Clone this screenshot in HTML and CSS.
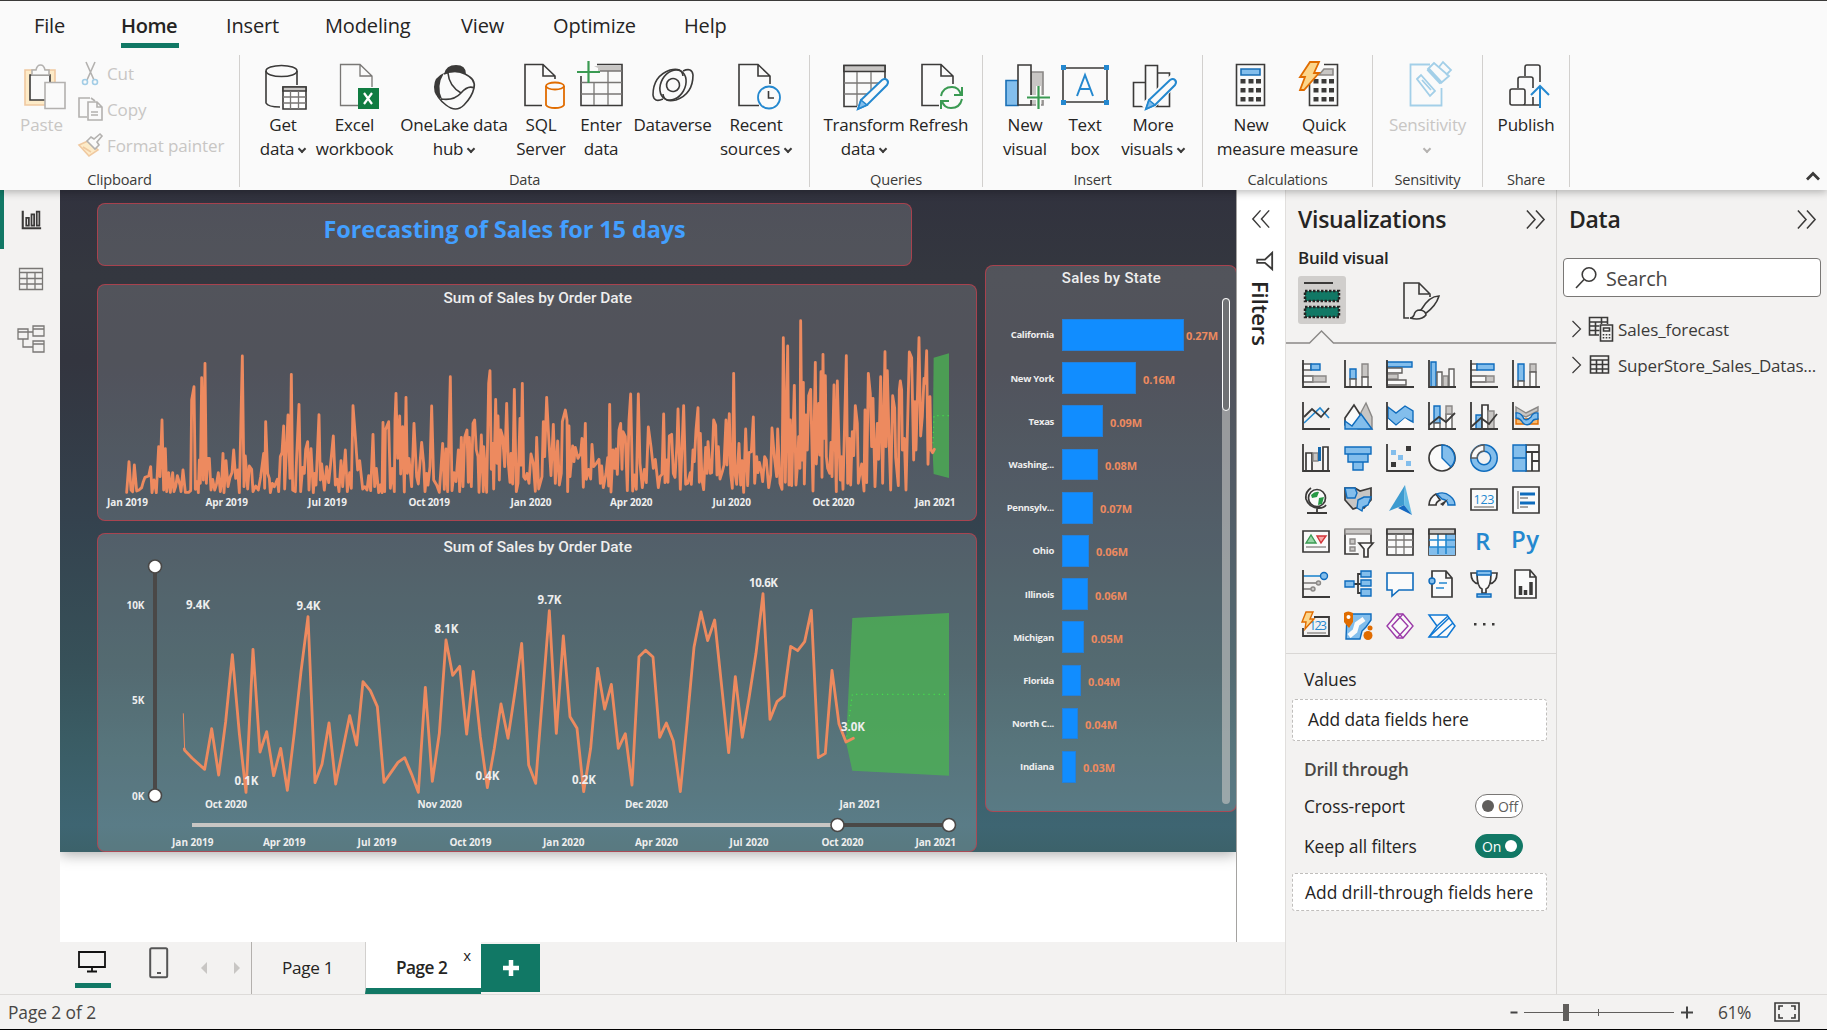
FILE: index.html
```html
<!DOCTYPE html>
<html lang="en">
<head>
<meta charset="utf-8">
<title>Sales forecast report</title>
<link rel="stylesheet" href="styles.css">
</head>
<body>
<div class="app">
<header class="ribbon">
  <nav class="tabs">
    <span class="tab t-file">File</span><span class="tab t-home active">Home</span><span class="tab t-insert">Insert</span><span class="tab t-model">Modeling</span><span class="tab t-view">View</span><span class="tab t-opt">Optimize</span><span class="tab t-help">Help</span>
  </nav>
  <div class="groups">
    <section class="group g-clip">
      <div class="clip">
        <div class="paste">
          <svg width="44" height="50" viewBox="22 62 44 50"><path class="tan" d="M26 70h30v35H26z"/><path d="M31 75h20v25H31z" fill="#fafafa"/><path class="dis" d="M33 75v-5h4q1-5 4.500-5t4.500 5h4v5z"/><path class="dis" d="M46 82.500h20v26H46z"/></svg>
          <span>Paste</span>
        </div>
        <div class="cliplist">
          <div><svg width="26" height="26" viewBox="77 60 26 26"><path class="dis" d="M86 62l8 18M95 62l-8 18"/><g fill="#fafafa" stroke="#a3cde6" stroke-width="1.600"><circle cx="85" cy="82" r="2.500"/><circle cx="95" cy="82" r="2.500"/></g></svg>Cut</div>
          <div><svg width="26" height="26" viewBox="77 96 26 26"><path class="dis" d="M90 98h-11v19h8M91 98l4 3"/><path class="dis" d="M88 102h9l5 5v13H88zM97 102v5h5M91 112h7M91 115h7"/></svg>Copy</div>
          <div><svg width="26" height="26" viewBox="77 132 26 26"><path class="tan" d="M79 145l9-4 10 9-9 6zM83 147l8 5"/><path class="dis" d="M87 141l4-4 3 2 6-5 2 2-5 6 2 3-4 4z"/></svg>Format painter</div>
        </div>
      </div>
      <h6>Clipboard</h6>
    </section>
    <section class="group g-data">
      <div class="btns">
        <div class="btn"><svg viewBox="-30 62 60 50"><path d="M-17 71v32q2 4 14 4M14 71v14"/><ellipse cx="-1.500" cy="71" rx="15.500" ry="5.500"/><path fill="#fff" d="M0 87h23v22H0z"/><path fill="#c8c6c4" d="M0 87h23v4H0z"/><path class="g" d="M0 97h23M0 103h23M7.500 91v18M15.500 91v18"/></svg><span>Get<br>data<i></i></span></div>
        <div class="btn"><svg viewBox="-30 62 60 50"><path class="g" d="M3 105.500h-17.500V64.500H5L17 76v11M5 64.500V76h12"/><path d="M3 88h21v21H3z" fill="#107c41" stroke="none"/><path d="M9 93l8 11M17 93L9 104" stroke="#fff" stroke-width="2.200"/></svg><span>Excel<br>workbook</span></div>
        <div class="btn"><svg viewBox="-30 62 60 50"><path fill="#3b3a39" stroke="none" d="M-10 74Q-8 65 2 65t10 9q-10-4-22 0zM-10 73Q-20 77-20 87t8 12q-6-13 2-26z"/><path d="M-10 74Q0 69 11 74T20 88 10 105-8 105-16 94M-6 73Q-5 86 7 93M-13 99Q0 101 7 93T20 88"/></svg><span>OneLake data<br>hub<i></i></span></div>
        <div class="btn"><svg viewBox="-30 62 60 50"><path d="M1 105.500h-17V64.500H2L14 76v3M2 64.500V76h12"/><g fill="#fafafa" stroke="#e06c00" stroke-width="1.800"><path d="M5 86v19q2 3 9 3t9-3V86"/><ellipse cx="14" cy="86" rx="9" ry="3.500"/></g></svg><span>SQL<br>Server</span></div>
        <div class="btn"><svg viewBox="-30 62 60 50"><path d="M-20 76v29.500h41v-41H-4"/><path fill="#c8c6c4" stroke="none" d="M-7 66h27v5H-3v-3z"/><path class="g" d="M-1 71h22M-20 82.500h41M-20 94h41M-7 83v22M7 71v34"/><path d="M-12.500 61v22M-24 72h23" stroke="#3a9a52" stroke-width="2.200"/></svg><span>Enter<br>data</span></div>
        <div class="btn"><svg viewBox="-30 62 60 50"><g transform="rotate(30 0 85)"><ellipse cx="0" cy="85" rx="12" ry="16"/><circle cx="0" cy="85" r="6.500"/></g><path d="M-10 99q-9 4-10-4 0-19 17-25 12-3 13 6M10 71q9-4 10 4 0 19-17 25-12 3-13-6"/></svg><span>Dataverse</span></div>
        <div class="btn"><svg viewBox="-30 62 60 50"><path d="M3 105.500h-20V64.500H2L14 76v8M2 64.500V76h12"/><circle cx="13" cy="97.500" r="11" fill="#fafafa" stroke="#2488cf" stroke-width="1.800"/><path d="M12.500 91v7H18"/></svg><span>Recent<br>sources<i></i></span></div>
      </div>
      <h6>Data</h6>
    </section>
    <section class="group g-query">
      <div class="btns">
        <div class="btn"><svg viewBox="-30 62 60 50"><path d="M-7 106.500h-13v-41h41v14"/><path d="M-20 65.500h41v6h-41z" fill="#c8c6c4"/><path class="g" d="M-20 83h37M-20 94h28M-7 72v34M7 72v22"/><path class="pen" d="M-6 109l3-9L18 80q3-2 5 0t0 5L3 105z"/><path class="pf" d="M-6 109l3-9 6 5z"/></svg><span>Transform<br>data<i></i></span></div>
        <div class="btn"><svg viewBox="-30 62 60 50"><path d="M0 105.500h-17V64.500H2L14 76v8M2 64.500V76h12"/><g stroke="#3a9a52" stroke-width="2"><path d="M2 96Q4 87 13 87q7 0 9 8M23 87v8h-8M23 99q-2 9-11 9-7 0-9-7M2 109v-8h8"/></g></svg><span>Refresh</span></div>
      </div>
      <h6>Queries</h6>
    </section>
    <section class="group g-insert">
      <div class="btns">
        <div class="btn"><svg viewBox="-30 62 60 50"><path d="M-19 80.500H-7v25h-12z" fill="#83beec" stroke="#1a6fb5"/><path d="M6 72h12v33H6z" fill="#c8c6c4" stroke="#8a8886"/><path d="M-7 65H6v40H-7z" fill="#fafafa"/><path d="M13.500 86v23M2 97.500h23" stroke="#fafafa" stroke-width="5"/><path d="M13.500 86v23M2 97.500h23" stroke="#3a9a52" stroke-width="2.200"/></svg><span>New<br>visual</span></div>
        <div class="btn"><svg viewBox="-30 62 60 50"><path d="M-22 68h44v34h-44z"/><g fill="#2488cf" stroke="none"><path d="M-24 65h5v5h-5zM19 65h5v5h-5zM-24 100h5v5h-5zM19 100h5v5h-5z"/></g><path d="M-8 96L0 75l8 21M-5 89H5" stroke="#2488cf" stroke-width="2"/></svg><span>Text<br>box</span></div>
        <div class="btn"><svg viewBox="-30 62 60 50"><path d="M-19.500 82.500h12v24h-12zM-7.500 65.500h12v41h-12zM4.500 73h12v33.500h-12z"/><path d="M-8 109L22 79" stroke="#fafafa" stroke-width="12"/><path class="pen" d="M-7 109l3-9L17 80q3-2 5 0t0 5L2 105z"/><path class="pf" d="M-7 109l3-9 6 5z"/></svg><span>More<br>visuals<i></i></span></div>
      </div>
      <h6>Insert</h6>
    </section>
    <section class="group g-calc">
      <div class="btns">
        <div class="btn"><svg viewBox="-30 62 60 50"><path d="M-14.500 64.500h28v41h-28z"/><path d="M-10 69H9v6h-19z" fill="#83beec" stroke="#1a6fb5"/><g class="k"><path d="M-8 79v24M0 79v24M7.500 79v24"/></g></svg><span>New<br>measure</span></div>
        <div class="btn"><svg viewBox="-30 62 60 50"><path d="M-14.500 84v21.500h28v-41H0"/><path d="M0 69h9v6h-14z" fill="#c8c6c4" stroke="#8a8886"/><g class="k"><path d="M-8 79v24M0 79v24M7.500 79v24"/></g><path d="M-14 62h9l-5 11h5l-15 17h-4l5-13h-5z" fill="#fcd58a" stroke="#e06c00" stroke-width="1.800"/></svg><span>Quick<br>measure</span></div>
      </div>
      <h6>Calculations</h6>
    </section>
    <section class="group g-sens">
      <div class="btns">
        <div class="btn off"><svg viewBox="-30 62 60 50"><g stroke="#a3cfe8" stroke-width="1.800"><path d="M2 64.500h-19.500v41h31V88M-11 79l4-4 14 16-5 5zM-6 80l9 10M0 69l6-6 15 13-8 7zM11 67l4-5 8 8-5 5"/><path d="M0 69l13 14" stroke-width="4"/></g></svg><span>Sensitivity<br><i></i></span></div>
      </div>
      <h6>Sensitivity</h6>
    </section>
    <section class="group g-share">
      <div class="btns">
        <div class="btn"><svg viewBox="-30 62 60 50"><path d="M-16 91q0-2 2-2H-3q2 0 2 2v12q0 2-2 2h-11q-2 0-2-2zM-8 88V79q0-2 2-2H5q2 0 2 2v9M-1 76V67q0-2 2-2h11q2 0 2 2v15M-2 105H14M7 97v8"/><path d="M14 108V86M5 95l9-9 9 9" stroke="#2488cf" stroke-width="2"/></svg><span>Publish</span></div>
      </div>
      <h6>Share</h6>
    </section>
    <svg class="collapse" width="18" height="12" viewBox="0 0 18 12"><path d="M3 9.500l6-6 6 6" stroke-width="2.800"/></svg>
  </div>
</header>

<main class="work">
  <aside class="rail">
    <div class="railitem on"><svg width="21" height="21" viewBox="0 0 24 24"><path d="M2 2v20h21" stroke-width="2.400"/><path d="M6 10h3v9H6zM12 6h3v13h-3zM18 3h3v16h-3z" stroke-width="2"/></svg></div>
    <div class="railitem"><svg width="26" height="26" viewBox="0 0 26 26"><path class="g" d="M1.500 2.500h23v21h-23zM1.500 6.500h23M1.500 12.500h23M1.500 18h23M9 6v17M17 6v17"/></svg></div>
    <div class="railitem"><svg width="30" height="30" viewBox="0 0 30 30"><path class="g" d="M2 5h10v10H2zM2 8h10M17 2h11v10H17zM17 5h11M17 17h11v11H17zM17 20h11M12 8h5M7 15v8h10"/></svg></div>
  </aside>
  <section class="center">
    <div class="stage">
      <div class="report">
        <div class="col-left">
          <div class="card headline">Forecasting of Sales for 15 days</div>
          <div class="card chart1">
            <svg width="880" height="236" viewBox="97 284 880 236">
              <text class="title" x="443.500" y="303" textLength="188.500" lengthAdjust="spacingAndGlyphs">Sum of Sales by Order Date</text>
              <g transform="translate(60 190) scale(.33333)">
                <path class="band" d="M2618 785L2621 503L2667 490V864L2621 852z"/>
                <path class="dots" d="M2619 760L2622 677H2667"/>
                <polyline class="sales" points="200,907 207,815 213,900 218,905 223,825 230,903 237,900 245,893 250,875 255,862 266,858 272,830 276,908 282,870 289,908 296,770 300,860 306,690 311,900 316,776 320,905 326,848 331,907 338,848 342,905 347,890 352,857 360,885 363,905 369,840 376,907 386,907 392,902 395,630 402,590 406,898 411,875 415,908 418,810 421,880 425,563 430,870 435,520 439,880 443,805 448,805 453,900 458,868 464,900 469,885 475,848 481,905 485,875 489,790 492,908 498,812 504,890 510,862 516,848 521,780 527,865 533,840 538,908 547,498 552,890 556,798 563,897 568,828 575,838 579,905 587,888 595,900 602,860 611,790 614,895 617,695 623,850 628,865 631,908 637,880 643,890 652,868 656,905 661,800 666,788 671,708 674,897 684,675 690,865 694,553 698,900 706,905 710,800 717,643 722,905 728,832 733,850 737,778 743,755 747,900 753,776 760,908 764,850 768,885 777,674 781,870 785,822 793,900 800,830 806,878 812,820 820,738 826,885 832,868 837,905 843,812 848,890 856,780 862,905 869,848 874,895 879,647 886,740 893,840 899,812 908,897 914,890 921,900 926,857 932,902 939,733 944,890 949,835 956,908 961,885 966,908 969,697 974,905 976,720 986,695 991,895 997,835 1003,905 1005,690 1008,610 1013,805 1019,678 1022,852 1028,710 1033,906 1038,622 1042,850 1047,805 1055,890 1062,700 1070,860 1075,882 1085,757 1091,820 1095,905 1100,850 1104,885 1110,830 1115,648 1121,870 1130,885 1138,907 1148,760 1153,898 1158,777 1163,905 1171,560 1176,902 1182,848 1188,875 1195,780 1199,905 1204,742 1209,890 1214,742 1221,720 1225,877 1228,742 1234,890 1239,700 1244,690 1249,780 1254,800 1257,907 1264,735 1270,905 1271,770 1280,907 1286,580 1290,542 1294,838 1298,760 1301,897 1307,628 1311,820 1314,678 1318,870 1322,720 1328,740 1334,830 1340,640 1345,820 1350,877 1353,790 1358,882 1363,598 1369,905 1374,880 1380,685 1383,826 1387,580 1391,860 1396,868 1401,850 1407,880 1413,792 1420,820 1426,904 1430,742 1436,897 1446,860 1450,695 1454,800 1460,622 1466,740 1473,857 1480,703 1486,880 1493,753 1498,885 1504,850 1507,695 1516,660 1521,690 1523,905 1527,708 1530,860 1538,768 1542,815 1546,772 1554,805 1562,790 1566,745 1570,892 1576,700 1579,868 1586,838 1592,867 1596,763 1601,830 1609,820 1617,808 1621,880 1625,828 1630,893 1638,850 1643,803 1646,888 1649,643 1653,906 1659,780 1664,835 1668,777 1672,853 1677,720 1682,700 1686,838 1689,725 1696,740 1702,902 1707,690 1712,612 1718,903 1723,855 1729,898 1735,612 1740,820 1747,893 1753,838 1759,878 1765,711 1773,770 1780,835 1786,808 1795,893 1800,860 1806,853 1811,672 1815,878 1820,810 1824,877 1828,738 1835,733 1840,850 1845,862 1851,760 1854,657 1861,898 1871,647 1877,883 1883,880 1891,848 1894,883 1899,780 1903,815 1908,720 1914,653 1918,877 1921,730 1926,870 1931,899 1937,772 1941,850 1944,755 1951,850 1955,848 1961,690 1967,706 1971,855 1975,770 1980,867 1987,845 1992,825 1998,690 2001,825 2008,671 2012,850 2017,895 2021,550 2025,850 2030,883 2037,760 2042,885 2046,812 2051,907 2057,717 2063,887 2067,788 2074,785 2080,681 2084,880 2090,800 2094,848 2098,817 2104,845 2108,875 2114,800 2119,810 2126,893 2132,855 2136,714 2143,800 2150,860 2153,717 2160,880 2166,898 2170,443 2176,877 2183,468 2187,885 2191,690 2195,887 2203,586 2208,885 2213,820 2216,740 2220,835 2222,392 2226,810 2230,577 2233,882 2238,675 2242,780 2246,617 2252,598 2259,903 2266,517 2269,822 2276,640 2279,795 2283,545 2286,862 2289,493 2292,745 2296,557 2299,800 2303,835 2309,850 2313,757 2316,860 2322,585 2329,905 2332,573 2337,765 2341,870 2345,800 2349,898 2359,497 2363,880 2368,745 2372,885 2377,725 2381,797 2386,647 2392,700 2395,880 2405,822 2412,903 2415,660 2420,878 2425,550 2431,612 2435,770 2439,625 2445,890 2452,700 2456,808 2462,560 2468,880 2475,485 2478,770 2482,542 2487,740 2492,900 2498,617 2504,655 2507,803 2515,887 2518,600 2521,573 2525,600 2527,780 2533,745 2538,900 2548,486 2555,503 2561,810 2565,635 2568,780 2577,443 2582,738 2587,680 2592,565 2596,580 2600,482 2604,823 2610,620 2613,780 2618,788 2623,778"/>
              </g>
              <g class="axis"><text x="107" y="506" textLength="41">Jan 2019</text><text x="205.500" y="506" textLength="42.500">Apr 2019</text><text x="308" y="506" textLength="39">Jul 2019</text><text x="408.500" y="506" textLength="41.500">Oct 2019</text><text x="510.500" y="506" textLength="41">Jan 2020</text><text x="610" y="506" textLength="42.500">Apr 2020</text><text x="712.500" y="506" textLength="38.500">Jul 2020</text><text x="812.500" y="506" textLength="42">Oct 2020</text><text x="915" y="506" textLength="40.500">Jan 2021</text></g>
            </svg>
          </div>
          <div class="card chart2">
            <svg width="880" height="318" viewBox="97 533 880 318">
              <text class="title" x="443.500" y="552" textLength="188.500" lengthAdjust="spacingAndGlyphs">Sum of Sales by Order Date</text>
              <path d="M155 567V796" stroke="#4a4847" stroke-width="4"/>
              <circle class="knob" cx="155" cy="566.500" r="6.500"/><circle class="knob" cx="155" cy="795.500" r="6.500"/>
              <g transform="translate(60 525) scale(.33333)">
                <path class="band" d="M2358 651L2377 279L2667 264V752L2377 737z"/>
                <path class="dots" d="M2360 635L2377 508H2667"/>
                <path d="M370 565L374 676" fill="none" stroke="#ed8a5f" stroke-width="3"/>
                <polyline class="sales" points="373,672 374,676 396,699 434,733 455,611 476,750 497,590 517,389 538,625 558,802 579,373 600,681 620,620 641,752 662,670 682,796 703,622 723,440 744,275 765,773 786,718 807,594 827,777 848,675 869,572 890,660 909,470 931,497 952,545 972,772 1014,712 1034,698 1055,748 1075,802 1096,487 1117,769 1138,625 1158,345 1178,451 1199,424 1220,627 1240,439 1261,635 1282,788 1303,670 1323,537 1344,640 1365,500 1385,355 1406,720 1427,775 1468,257 1489,625 1510,333 1530,575 1551,610 1571,800 1592,670 1613,430 1634,552 1654,478 1675,670 1696,626 1716,780 1737,395 1757,376 1779,396 1799,637 1819,594 1840,648 1861,800 1881,595 1902,367 1923,261 1943,347 1964,285 2006,683 2026,455 2047,637 2067,520 2088,385 2109,206 2130,583 2151,530 2172,513 2192,364 2213,377 2234,350 2254,256 2275,698 2296,685 2316,436 2337,597 2358,651 2380,640"/>
              </g>
              <g class="axis"><text x="126.500" y="609" textLength="18">10K</text><text x="132" y="704" textLength="12.500">5K</text><text x="132" y="800" textLength="12.500">0K</text>
              <text x="205" y="808" textLength="42">Oct 2020</text><text x="417.500" y="808" textLength="44.500">Nov 2020</text><text x="625" y="808" textLength="43">Dec 2020</text><text x="839.500" y="808" textLength="41">Jan 2021</text>
              <text x="172" y="846" textLength="41.500">Jan 2019</text><text x="263" y="846" textLength="42.500">Apr 2019</text><text x="357.500" y="846" textLength="39">Jul 2019</text><text x="449.500" y="846" textLength="42">Oct 2019</text><text x="543" y="846" textLength="41.500">Jan 2020</text><text x="635" y="846" textLength="43">Apr 2020</text><text x="729.500" y="846" textLength="39">Jul 2020</text><text x="821.500" y="846" textLength="42">Oct 2020</text><text x="915.500" y="846" textLength="40.500">Jan 2021</text></g>
              <g class="vals"><text x="186" y="609" textLength="24">9.4K</text><text x="296.500" y="610" textLength="24">9.4K</text><text x="434.500" y="633" textLength="24">8.1K</text><text x="537.500" y="604" textLength="24">9.7K</text><text x="749" y="587" textLength="29">10.6K</text><text x="234.500" y="785" textLength="24">0.1K</text><text x="475.500" y="780" textLength="24">0.4K</text><text x="572" y="784" textLength="24">0.2K</text><text x="841" y="731" textLength="24">3.0K</text></g>
              <path d="M192 825H838" stroke="#c8c6c4" stroke-width="4"/><path d="M837 825H949" stroke="#4a4847" stroke-width="4"/>
              <circle class="knob" cx="837.500" cy="825" r="6.500"/><circle class="knob" cx="949" cy="825" r="6.500"/>
            </svg>
          </div>
        </div>
        <div class="card states">
          <h3>Sales by State</h3>
          <div class="statebody">
            <div class="rows">
              <div class="row first"><b>California</b><u style="width:122px"></u><em>0.27M</em></div>
              <div class="row"><b>New York</b><u style="width:74px"></u><em>0.16M</em></div>
              <div class="row"><b>Texas</b><u style="width:41px"></u><em>0.09M</em></div>
              <div class="row"><b>Washing...</b><u style="width:36px"></u><em>0.08M</em></div>
              <div class="row"><b>Pennsylv...</b><u style="width:31px"></u><em>0.07M</em></div>
              <div class="row"><b>Ohio</b><u style="width:27px"></u><em>0.06M</em></div>
              <div class="row"><b>Illinois</b><u style="width:26px"></u><em>0.06M</em></div>
              <div class="row"><b>Michigan</b><u style="width:22px"></u><em>0.05M</em></div>
              <div class="row"><b>Florida</b><u style="width:19px"></u><em>0.04M</em></div>
              <div class="row"><b>North C...</b><u style="width:16px"></u><em>0.04M</em></div>
              <div class="row"><b>Indiana</b><u style="width:14px"></u><em>0.03M</em></div>
            </div>
            <div class="track"><div class="thumb"></div></div>
          </div>
        </div>
      </div>
    </div>
    <div class="filters">
      <svg width="20" height="20" viewBox="0 0 22 22"><path d="M10.500 1.500L2 11l8.500 9.500M20 1.500L11.500 11l8.500 9.500"/></svg>
      <svg class="funnel" width="20" height="20" viewBox="0 0 22 22"><path d="M20 2v18l-8-7H3.500V9.500H12z" stroke-width="2"/></svg>
      <span>Filters</span>
    </div>
    <footer class="pages">
      <div class="dev"><svg width="30" height="26" viewBox="0 0 30 26"><path d="M2 3h26v15H2zM15 18v4M10 22.500h10" stroke="#111" stroke-width="1.800"/></svg></div>
      <div class="dev2"><svg width="20" height="32" viewBox="0 0 20 32"><rect x="1.200" y="1.200" width="17" height="29" rx="1.500" stroke="#555" stroke-width="2"/><path d="M8 26h4" stroke="#555" stroke-width="2"/></svg></div>
      <svg class="prev" width="8" height="14" viewBox="0 0 8 14"><path d="M7 1v12L1 7z" fill="#c8c6c4" stroke="none"/></svg>
      <svg class="next" width="8" height="14" viewBox="0 0 8 14"><path d="M1 1v12l6-6z" fill="#c8c6c4" stroke="none"/></svg>
      <div class="page p1">Page 1</div>
      <div class="page p2">Page 2<small>x</small></div>
      <div class="add"><svg width="18" height="18" viewBox="0 0 18 18"><path d="M9 1v16M1 9h16" stroke="#fff" stroke-width="4.500"/></svg></div>
    </footer>
  </section>

  <aside class="viz">
    <div class="panehead"><h2>Visualizations</h2><svg width="21" height="21" viewBox="0 0 22 22"><path d="M2 1.500L10.500 11 2 20.500M11.500 1.500L20 11l-8.500 9.500"/></svg></div>
    <h4>Build visual</h4>
    <div class="modes">
      <div class="mode"><svg width="48" height="48" viewBox="0 0 48 48"><path d="M6 7h29" stroke-width="2"/><path d="M7 15h34v10H7zM7 31h34v10H7z" fill="#117865" stroke="#252423" stroke-width="2.500" stroke-dasharray="2.500 1.500"/></svg></div>
      <svg width="40" height="40" viewBox="0 0 40 40"><path d="M8 38H3V3h15l11 11v3M18 3v11h10"/><path d="M19 30q-5 0-6 5-1 3-4 3 11 3 16-3 0-4-6-5zM20 30q8-14 18-14-3 10-14 18"/></svg>
    </div>
    <svg class="notch" width="270" height="15" viewBox="0 0 270 15"><path d="M0 13H23.500L35.500 1 47.500 13H270" stroke="#8a8886" stroke-width="1.400"/></svg>
    <div class="icons">
      <svg viewBox="0 0 28 28"><path class="w" d="M1 4h8v6H1z"/><path class="b" d="M9 4h9v6H9z"/><path class="w" d="M1 16h10v6H1z"/><path class="y" d="M11 16h13v6H11z"/><path class="ax" d="M1 0v27h27"/></svg>
      <svg viewBox="0 0 28 28"><path class="b" d="M6 9h6v10H6z"/><path class="w" d="M6 19h6v8H6z"/><path class="y" d="M18 4h6v13h-6z"/><path class="w" d="M18 17h6v10h-6z"/><path class="ax" d="M1 0v27h27"/></svg>
      <svg viewBox="0 0 28 28"><path class="b" d="M1 2h25v5H1z"/><path class="w" d="M1 8h15v5H1z"/><path class="y" d="M1 14h11v5H1z"/><path class="w" d="M1 20h19v5H1z"/><path class="ax" d="M1 0v27h27"/></svg>
      <svg viewBox="0 0 28 28"><path class="b" d="M3 2h5v25H3z"/><path class="w" d="M9 12h5v15H9z"/><path class="y" d="M15 16h5v11h-5z"/><path class="w" d="M21 9h5v18h-5z"/><path class="ax" d="M1 0v27h27"/></svg>
      <svg viewBox="0 0 28 28"><path class="w" d="M1 4h6v6H1z"/><path class="b" d="M7 4h17v6H7z"/><path class="w" d="M1 16h15v6H1z"/><path class="y" d="M16 16h8v6h-8z"/><path class="ax" d="M1 0v27h27"/></svg>
      <svg viewBox="0 0 28 28"><path class="b" d="M6 4h6v17H6z"/><path class="w" d="M6 21h6v6H6z"/><path class="y" d="M18 4h6v8h-6z"/><path class="w" d="M18 12h6v15h-6z"/><path class="ax" d="M1 0v27h27"/></svg>

      <svg viewBox="0 0 28 28"><path class="bl" d="M2 21L18 6l9 10"/><path class="ax" d="M2 15l8-8 9 8 8-9"/><path class="ax" d="M1 0v27h27"/></svg>
      <svg viewBox="0 0 28 28"><path class="y" d="M14 16l8-15 6 14v12H14z"/><path class="w k1" d="M1 16L10 3l9 14-9 9-9-3z"/><path class="b" d="M1 19l7 5 9-12 11 15H1z"/></svg>
      <svg viewBox="0 0 28 28"><path class="b" d="M2 5l8 6 9-7 8 5v11l-8-4-9 7-8-7z"/><path fill="#fafafa" d="M2 17l8 7 9-8 8 6v4H2z"/><path class="ax" d="M1 0v27h27"/></svg>
      <svg viewBox="0 0 28 28"><path class="b" d="M6 4h6v17H6z"/><path class="w" d="M6 21h6v6H6zM18 12h6v15h-6z"/><path class="y" d="M18 4h6v8h-6z"/><path class="ax" d="M1 23l10-8 7 5 9-9"/><path class="ax" d="M1 0v27h27"/></svg>
      <svg viewBox="0 0 28 28"><path class="b" d="M6 13h6v14H6z"/><path class="w k1" d="M12 3h6v24h-6z"/><path class="y" d="M18 9h6v18h-6z"/><path class="ax" d="M1 25l10-9 8 6 8-10"/><path class="ax" d="M1 0v27h27"/></svg>
      <svg viewBox="0 0 28 28"><path class="y" d="M4 5l10 6 12-6v4l-12 6-10-4z"/><path d="M4 17h22v5H4z" fill="#f8b96e" stroke="#e06c00"/><path class="b" d="M4 11q5-1 8 6 3 2 7-2 2-5 7-4v6q-5 0-6 3-4 5-9 1-3-5-7-5z"/><path class="ax" d="M1 0v27h27"/></svg>

      <svg viewBox="0 0 28 28"><path class="w k1" d="M4 9h6v18H4zM21 3h5v24h-5z"/><path class="y" d="M11 9h5v8h-5z"/><path d="M16 3h3v14h-3z" fill="#1368ae"/><path class="ax" d="M1 0v27h27"/></svg>
      <svg viewBox="0 0 28 28"><path class="b" d="M1 3h26v7H1zM4 10h20v8H4zM9 18h10v8H9z"/></svg>
      <svg viewBox="0 0 28 28"><path d="M20 2h5v5h-5zM5 18h5v5H5z" fill="#3b3a39"/><path d="M5 6h5v5H5zM12 11h5v5h-5zM20 17h5v5h-5z" fill="#83beec"/><path class="ax" d="M1 0v27h27"/></svg>
      <svg viewBox="0 0 28 28"><circle class="w k1" cx="14" cy="14" r="13"/><path class="b" d="M14 1v13l9 9A13 13 0 0014 1z"/></svg>
      <svg viewBox="0 0 28 28"><circle cx="14" cy="14" r="10" fill="none" stroke="#0f6cbd" stroke-width="8"/><circle cx="14" cy="14" r="10" fill="none" stroke="#83beec" stroke-width="5"/><path class="w" d="M1 14A13 13 0 0114 1v6a7 7 0 00-7 7z"/></svg>
      <svg viewBox="0 0 28 28"><path class="w k1" d="M14 1h13v26H14z"/><path class="b" d="M1 1h13v26H1zM1 14h13"/><path class="ax" d="M14 8h13M20 8v19M20 17h7"/></svg>

      <svg viewBox="0 0 28 28"><circle class="w k1" cx="15" cy="12" r="8.500"/><path d="M9 9q4-4 8-3l-2 5-5 1zM17 12l5-1-2 7-4 1z" fill="#279946"/><path class="ax" d="M9 2Q3 6 4 13q3 9 13 9 5 0 7-3M15 22v5M5 27h20"/></svg>
      <svg viewBox="0 0 28 28"><path class="y k1" d="M1 2h10l5 3 11-3v12l-7 8-5-1-6 2-8-9z"/><path class="b" d="M1 2h10l2 5-2 5H3zM14 14l6-3h7l-3 8-5 2-1 4-5-3z"/></svg>
      <svg viewBox="0 0 28 28"><path d="M19-1L3 25l15-6z" fill="#3d9bd0"/><path d="M19-1l7 30-8-10z" fill="#65bce5"/><path d="M12 22l6-3 8 10z" fill="#1468c0"/></svg>
      <svg viewBox="0 0 28 28"><path class="w k1" d="M1 19A13 13 0 018 8l4 6q-4 2-4 5z"/><path class="b" d="M9 8q7-3 13 2 5 4 5 9h-7q0-5-6-6z"/><path d="M12 18l8-5-5 7z" fill="#3b3a39"/></svg>
      <svg viewBox="0 0 28 28"><path class="w k1" d="M1 3h26v21H1z"/><text class="num" x="3.500" y="17.500" textLength="21">123</text><path d="M4 21h20" stroke="#8a8886"/></svg>
      <svg viewBox="0 0 28 28"><path class="w k1" d="M1 1h26v26H1z"/><path d="M8 8h15M8 17h15" stroke="#0f6cbd" stroke-width="3" fill="none"/><path d="M6 5v18M8 12h8M8 21h8" stroke="#8a8886" fill="none"/></svg>

      <svg viewBox="0 0 28 28"><path class="w k1" d="M1 3h26v21H1z"/><path d="M4 15l5-8 5 8z" fill="#97d6a6" stroke="#3a9a52"/><path d="M15 8h9l-5 7z" fill="#f7a5a5" stroke="#d13438"/><path d="M4 19h20" stroke="#8a8886"/></svg>
      <svg viewBox="0 0 28 28"><path class="w k1" d="M1 2h26v24H1z"/><path class="y" d="M1 1h26v5H1zM6 11h5v5H6zM6 19h5v4H6z"/><path d="M13 15h16v13H15z" fill="#f3f2f1"/><path class="w k1" d="M15 15h14l-5 6v8h-4v-8z"/></svg>
      <svg viewBox="0 0 28 28"><path class="w k1" d="M1 2h26v25H1z"/><path class="y k1" d="M1 1h26v5H1z"/><path class="l" d="M1 12h26M1 19h26M10 6v20M18 6v20"/></svg>
      <svg viewBox="0 0 28 28"><path class="w k1" d="M1 2h26v25H1z"/><path d="M18 6h9v21H1v-8h17z" fill="#83beec"/><path class="bl" d="M1 12h26M1 19h26M10 6v20M18 6v20"/><path class="y k1" d="M1 1h26v5H1z"/></svg>
      <svg viewBox="0 0 28 28"><text class="lang" x="5" y="22" textLength="15">R</text></svg>
      <svg viewBox="0 0 28 28"><text class="lang" x="-1" y="20" textLength="28">Py</text></svg>

      <svg viewBox="0 0 28 28"><path class="bl" d="M1 6h18"/><circle class="b" cx="22" cy="6" r="3.500"/><path class="l" d="M1 13h14M1 19h8"/><circle class="y" cx="16.500" cy="13" r="2"/><circle class="y" cx="11" cy="19" r="2"/><path class="ax" d="M1 0v27h27"/></svg>
      <svg viewBox="0 0 28 28"><path class="ax" d="M10 14h7M17 4h-3v19h3"/><path class="b" d="M1 11h9v6H1zM17 1h10v6H17zM17 10h10v6H17zM17 19h10v7H17z"/></svg>
      <svg viewBox="0 0 28 28"><path d="M1 3h26v17H13l-7 6v-6H1z" fill="#fafafa" stroke="#0f6cbd" stroke-width="1.600"/></svg>
      <svg viewBox="0 0 28 28"><path class="w k1" d="M4 1h14l6 7v19H4zM18 1v7h6"/><circle class="b" cx="4" cy="11" r="3"/><path class="bl" d="M11 13h8M8 18h8"/></svg>
      <svg viewBox="0 0 28 28"><path class="w k1" d="M7 3H1q0 10 8 11M21 3h6q0 10-8 11M7 3h14q0 14-5 16v4h-4v-4Q7 17 7 3z"/><path class="b" d="M7 1h14v4H7zM7 24h14v3H7z"/></svg>
      <svg viewBox="0 0 28 28"><path class="w k1" d="M3 0h15l6 7v21H3zM18 0v7h6"/><path d="M8.500 16v9M13.500 20v5M19 12v13" stroke="#3b3a39" stroke-width="3.500"/></svg>

      <svg viewBox="0 0 28 28"><path class="ax" d="M12 5h15v19H1V16"/><text class="num" x="7" y="18" textLength="18">123</text><path d="M5 21h19" stroke="#8a8886"/><path d="M4 0h7L8 7h4L3 17l1-7H0z" fill="#fcd58a" stroke="#e06c00"/></svg>
      <svg viewBox="0 0 28 28"><path class="b" d="M3 2h24v6l-5 7-4 4-2 8H2z"/><path d="M20 7l-7 5-2 7-6 5" stroke="#fafafa" stroke-width="5" fill="none"/><path d="M0 1q4-3 9 0v9l-4 6-5-6z" fill="#e06c00"/><circle cx="4.500" cy="5" r="2" fill="#fff"/><circle cx="24" cy="23.500" r="4.500" fill="#e06c00"/><circle cx="26" cy="16" r="2.500" fill="#e06c00"/></svg>
      <svg viewBox="0 0 28 28"><g fill="#fafafa" stroke="#9b3aa8" stroke-width="1.400"><path d="M11 2h6l10 12-10 12h-6L1 14z"/><path fill="none" d="M11 2l11 12-11 12M17 2L6 14l11 12"/></g></svg>
      <svg viewBox="0 0 28 28"><path d="M1 3h18l8 11-8 11H1l8-11z" fill="#fafafa" stroke="#0f78d4" stroke-width="1.500"/><path d="M9 14l11-10M1 25L21 6M9 25l16-14" fill="none" stroke="#0f78d4" stroke-width="1.500"/></svg>
      <svg viewBox="0 0 28 28"><path d="M4 11h2.500v2.500H4zM13 11h2.500v2.500H13zM22 11h2.500v2.500H22z" fill="#3b3a39"/></svg>
    </div>
    <div class="wells">
      <label class="lv">Values</label>
      <div class="well w1">Add data fields here</div>
      <label class="ld">Drill through</label>
      <div class="opt"><span>Cross-report</span><div class="toggle"><b></b>Off</div></div>
      <div class="opt"><span>Keep all filters</span><div class="toggle yes">On<b></b></div></div>
      <div class="well w2">Add drill-through fields here</div>
    </div>
  </aside>

  <aside class="data">
    <div class="panehead"><h2>Data</h2><svg width="21" height="21" viewBox="0 0 22 22"><path d="M2 1.500L10.500 11 2 20.500M11.500 1.500L20 11l-8.500 9.500"/></svg></div>
    <div class="search"><svg width="24" height="24" viewBox="0 0 24 24"><circle cx="15" cy="8.500" r="6.800"/><path d="M10 13.500L2 22"/></svg><span>Search</span></div>
    <div class="node"><svg width="11" height="18" viewBox="0 0 11 18"><path d="M1.500 1l8 8-8 8" stroke-width="1.200"/></svg><svg class="tb" width="26" height="26" viewBox="0 0 26 26"><path d="M11 19H1.500V1.500h18V8M1.500 6h18M1.500 10h10M1.500 14.500h10M7.500 6v13M13.500 2v6"/><path d="M12.500 9h12v16h-12zM15.500 12h6v3h-6z" fill="#f3f2f1"/><path d="M15.500 18v6M18.500 18v6M21.500 18v6" stroke-dasharray="1.500 1.500"/></svg><span class="n1">Sales_forecast</span></div>
    <div class="node"><svg width="11" height="18" viewBox="0 0 11 18"><path d="M1.500 1l8 8-8 8" stroke-width="1.200"/></svg><svg class="tb" width="26" height="26" viewBox="0 0 26 26"><path d="M2.500 4h18v17h-18zM2.500 8h18M2.500 12.500h18M2.500 17h18M8.500 8v13M14.500 8v13"/></svg><span class="n2">SuperStore_Sales_Datas...</span></div>
  </aside>
</main>

<footer class="status">
  <span class="pg">Page 2 of 2</span>
  <svg width="190" height="24" viewBox="1505 1000 190 24"><path d="M1508.500 1012.500h7M1679 1012.500h12M1685 1006.500v12" stroke="#444" stroke-width="2"/><path d="M1522 1012.500h150M1596.500 1009v7" stroke="#605e5c" stroke-width="1"/><path d="M1561 1004h6v17h-6z" fill="#605e5c" stroke="none"/></svg>
  <span class="pct">61%</span>
  <svg width="26" height="20" viewBox="0 0 26 20"><path d="M1 1h24v18H1z"/><path d="M5 8V4h4M17 4h4v4M21 12v4h-4M9 16H5v-4"/></svg>
</footer>
</div>
</body>
</html>
```
FILE: styles.css
```css
* { box-sizing: border-box; }
body { margin: 0; font-family: "Open Sans", "Noto Sans", sans-serif; color: #252423; }
.app { width: 1827px; height: 1030px; display: flex; flex-direction: column; background: #f3f2f1; overflow: hidden; border-top: 1px solid #3b3a39; border-bottom: 1px solid #000; }
svg { display: block; flex: none; fill: none; stroke: #3b3a39; stroke-width: 1.6; overflow: visible; }
h2, h3, h4, h6 { margin: 0; }

/* ribbon */
.ribbon { height: 189px; flex: none; background: #fafafa; box-shadow: 0 2px 8px rgba(0,0,0,.28); position: relative; z-index: 2; }
.tabs { height: 54px; display: flex; padding-left: 34px; font-size: 20px; letter-spacing: -.15px; }
.tab { padding-top: 11px; height: 47px; line-height: 28px; white-space: nowrap; margin-right: 47px; }
.t-file { width: 40px; }
.t-home { width: 58px; }
.t-insert { width: 52px; }
.t-model { width: 89px; }
.t-view { width: 45px; }
.t-opt { width: 84px; }
.tab.active { font-weight: 600; border-bottom: 5px solid #117865; letter-spacing: -.4px; }
.groups { display: flex; height: 132px; }
.group { border-right: 1px solid #d2d0ce; display: flex; flex-direction: column; justify-content: space-between; }
.group h6 { font-weight: 400; font-size: 14.6px; line-height: 15px; text-align: center; letter-spacing: -.2px; color: #3b3a39; }
.g-clip { width: 240px; }
.g-data { width: 570px; }
.g-query { width: 173px; }
.g-insert { width: 220px; }
.g-calc { width: 170px; }
.g-sens { width: 110px; }
.g-share { width: 87px; }
.btns { display: grid; justify-items: center; padding-top: 7px; }
.g-data .btns { grid-template-columns: 66px 77px 122px 52px 68px 75px 92px; padding-left: 10px; }
.g-query .btns { grid-template-columns: 86px 63px; padding-left: 11px; }
.g-insert .btns { grid-template-columns: 62px 58px 78px; padding-left: 11px; }
.g-calc .btns { grid-template-columns: 74px 72px; padding-left: 11px; }
.btn { width: 60px; display: flex; flex-direction: column; align-items: center; font-size: 17px; line-height: 24px; letter-spacing: -.2px; white-space: nowrap; text-align: center; }
.btn > svg { width: 60px; height: 50px; margin-bottom: 1px; }
.btn i { display: inline-block; width: 6px; height: 6px; border: solid #3b3a39; border-width: 0 2px 2px 0; transform: rotate(45deg); margin: 0 1px 3px 5px; }
.btn.off { color: #c8c6c4; }
.btn.off i { border-color: #b5b3b1; margin-left: 0; }
.g { stroke: #797775; stroke-width: 1.3; }
.pen { fill: #fafafa; stroke: #2488cf; stroke-width: 2; }
.pf { fill: #83beec; stroke: #2488cf; }
.k path { stroke-width: 5; stroke-dasharray: 4.5 4.5; }
.clip { display: flex; color: #c8c6c4; font-size: 17px; letter-spacing: -.1px; }
.paste { width: 59px; margin-left: 12px; padding-top: 7px; display: flex; flex-direction: column; align-items: center; line-height: 24px; margin-right: 6px; }
.paste svg { margin: 0 0 1px 3px; }
.cliplist > div { display: flex; align-items: center; gap: 4px; height: 36px; white-space: nowrap; }
.dis { stroke: #b3b1af; fill: #fafafa; }
.tan { stroke: #f0c9a0; fill: #fdebc8; }
.collapse { margin: 115px 0 0 234px; }

/* main area */
.work { display: flex; height: 804px; flex: none; }
.rail { width: 60px; }
.railitem { height: 60px; display: flex; align-items: center; justify-content: center; padding-left: 2px; }
.railitem.on { border-left: 4px solid #117865; padding: 0 2px 0 0; height: 59px; }
.center { width: 1226px; display: grid; grid-template-columns: 1176px 50px; grid-template-rows: 752px 52px; }
.stage { background: #fff; overflow: hidden; }
.report { height: 662px; display: flex; box-shadow: 0 2px 14px rgba(0,0,0,.35); background: linear-gradient(#31323e 0, #34373f 13%, #33353f 26%, #34424e 50%, #375159 72%, #3a5c64 83%, #3e6572 96%, #3c626a); }
.col-left { width: 880px; margin: 13px 8px 0 37px; }
.card { border: 1px solid rgba(190,62,75,.8); border-radius: 8px; background: rgba(255,255,255,.15); overflow: hidden; }
.card > svg { margin: -1px; }
.headline { width: 815px; height: 63px; margin-bottom: 18px; text-align: center; font-weight: 700; font-size: 23.5px; line-height: 51px; letter-spacing: -.1px; color: #439fff; white-space: nowrap; }
.chart1 { height: 237px; margin-bottom: 12px; }
.chart2 { height: 319px; }
.card text { stroke: none; fill: #eee; }
.title { font: 500 15.5px Roboto, sans-serif; }
.axis { font-weight: 700; font-size: 10px; }
.vals { font-weight: 700; font-size: 11.5px; }
.sales { stroke: #ed8a5f; stroke-width: 8.5; stroke-linejoin: round; stroke-linecap: round; }
.band { fill: #4bb552; fill-opacity: .75; stroke: none; }
.dots { stroke: #45e04d; stroke-width: 3.5; stroke-dasharray: 3.5 12; }
.knob { fill: #fff; stroke: #4a4847; stroke-width: 1.6; }
.states { width: 252px; height: 547px; margin-top: 75px; flex: none; color: #eee; }
.states h3 { font: 500 15px/24px Roboto, sans-serif; letter-spacing: .3px; text-align: center; width: 251px; }
.statebody { display: flex; justify-content: space-between; padding: 8px 6px 0 0; }
.rows { padding-top: 21px; }
.row { display: flex; align-items: center; height: 43.2px; padding-bottom: 11.4px; }
.row b { width: 68px; font-size: 9.5px; letter-spacing: -.3px; text-align: right; margin-right: 8px; white-space: nowrap; }
.row u { height: 31.8px; background: #118dff; border: 1px solid #2380da; }
.row em { font-style: normal; font-weight: 700; font-size: 11px; letter-spacing: -.05px; color: #ed8a5f; margin-left: 7px; padding-top: 2px; }
.row.first em { margin-left: 2px; }
.track { width: 8px; height: 506px; border-radius: 4px; background: rgba(200,198,196,.6); }
.thumb { height: 113px; border: 1px solid #fff; border-radius: 4px; background: #6f7174; }
.filters { background: #fff; border-left: 1px solid #a5a3a1; border-right: 1px solid #e1dfdd; display: flex; flex-direction: column; align-items: flex-start; padding: 19px 0 0 14px; }
.filters .funnel { margin: 22px 0 0 3px; }
.filters span { writing-mode: vertical-rl; font-weight: 600; font-size: 22px; line-height: 26px; letter-spacing: -.1px; margin: 10px 0 0 -3px; }
.pages { grid-column: 1 / 3; display: flex; border-right: 1px solid #e1dfdd; }
.dev { width: 36px; margin-left: 15px; height: 46px; padding: 7px 0 0 2px; border-bottom: 5px solid #117865; }
.dev2 { margin: 5px 0 0 38px; }
.prev { margin: 19px 0 0 31px; }
.next { margin: 19px 10px 0 25px; }
.page { line-height: 52px; font-size: 17.2px; letter-spacing: -.3px; border-left: 1px solid #b3b0ad; padding-left: 30px; width: 114px; white-space: nowrap; }
.p2 { width: 116px; background: #fff; border-color: #d2d0ce; border-bottom: 6px solid #117865; font-weight: 600; letter-spacing: -.5px; display: flex; }
.p2 small { font-size: 15px; line-height: 27px; margin-left: 16px; font-weight: 400; }
.add { width: 59px; height: 48px; margin-top: 2px; background: #117865; display: flex; align-items: center; justify-content: center; }

/* side panes */
.viz { width: 271px; border-right: 1px solid #d9d7d5; }
.panehead { display: flex; justify-content: space-between; padding: 13px 10px 0 12px; align-items: center; height: 45px; }
.panehead h2 { font-weight: 600; font-size: 23px; line-height: 32px; letter-spacing: -.3px; }
.viz h4 { font-weight: 600; font-size: 17px; line-height: 24px; letter-spacing: -.3px; padding: 11px 0 1px 12px; }
.modes { display: flex; padding: 5px 0 0 12px; gap: 55px; align-items: center; }
.mode { width: 48px; height: 48px; border-radius: 3px; background: #d0cecc; }
.notch { margin-top: 6px; }
.icons { display: grid; grid-template-columns: repeat(6, 28px); grid-auto-rows: 28px; gap: 14px; padding: 15px 0 13px 16px; }
.icons svg { width: 28px; height: 28px; stroke: none; stroke-width: 1.4; }
.icons .w { fill: #fafafa; stroke: #605e5c; }
.icons .b { fill: #83beec; stroke: #0f6cbd; }
.icons .y { fill: #c8c6c4; stroke: #8a8886; }
.icons .k1 { stroke: #3b3a39; stroke-width: 1.7; }
.icons .ax { stroke: #3b3a39; stroke-width: 1.8; fill: none; }
.icons .bl { stroke: #2488cf; stroke-width: 1.6; fill: none; }
.icons .l { stroke: #797775; stroke-width: 1.3; }
.num { fill: #2488cf; font-size: 12.5px; }
.lang { fill: #2488cf; font-weight: 600; font-size: 24px; }
.wells { border-top: 1px solid #d9d7d5; display: flex; flex-direction: column; font-size: 17.4px; letter-spacing: -.1px; }
.wells label { padding-left: 18px; line-height: 24px; }
.lv { margin: 13px 0 8px; }
.ld { margin: 16px 0 5px; font-weight: 600; color: #484644; letter-spacing: -.2px; }
.well { margin: 0 9px 0 6px; width: 255px; border: 1px dashed #c0bebc; border-radius: 3px; background: #fff; white-space: nowrap; }
.w1 { height: 42px; line-height: 38px; padding-left: 15px; }
.w2 { height: 38px; line-height: 36px; padding-left: 12px; margin-top: 7px; letter-spacing: 0; }
.opt { display: flex; height: 40px; align-items: center; justify-content: space-between; padding: 0 33px 0 18px; }
.toggle { width: 48px; height: 24px; border: 1px solid #797775; border-radius: 12px; background: #fff; display: flex; align-items: center; gap: 4px; padding-left: 6px; font-size: 14px; color: #605e5c; }
.toggle b { width: 12px; height: 12px; border-radius: 50%; background: #605e5c; }
.toggle.yes { background: #117865; border-color: #117865; color: #fff; }
.toggle.yes b { background: #fff; }
.data { width: 270px; }
.search { height: 39px; margin: 23px 6px 14px; border: 1px solid #797775; border-radius: 4px; background: #fff; display: flex; align-items: center; gap: 8px; padding-left: 10px; font-size: 19.8px; color: #484644; letter-spacing: -.2px; }
.search span { padding-top: 2px; }
.node { display: flex; align-items: center; height: 36px; padding-left: 14px; font-size: 17px; letter-spacing: -.1px; white-space: nowrap; color: #3b3a39; }
.n2 { letter-spacing: -.2px; }
.tb { margin: 0 4px 0 6px; }

/* status bar */
.status { height: 35px; flex: none; border-top: 1px solid #dddbd9; display: flex; align-items: center; padding: 0 27px 0 8px; font-size: 17.4px; letter-spacing: -.1px; color: #484644; }
.pg { flex: 1; }
.pct { margin: 0 23px 0 21px; letter-spacing: -.4px; }
```
